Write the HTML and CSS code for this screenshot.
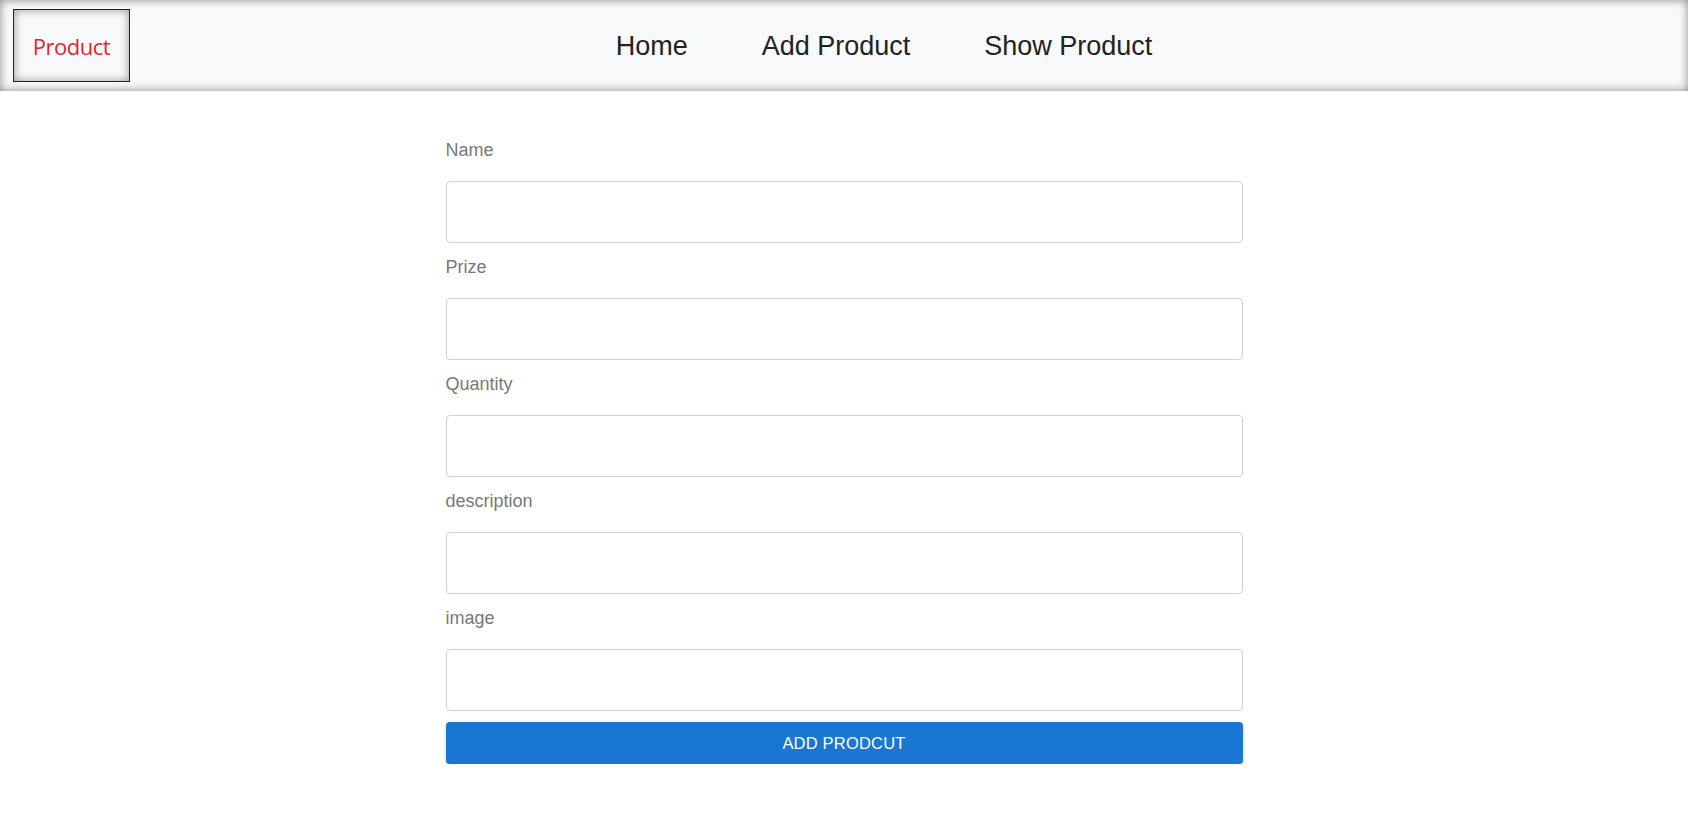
FILE: index.html
```html
<!DOCTYPE html>
<html lang="en">
<head>
<meta charset="utf-8">
<title>Product</title>
<link rel="stylesheet" href="styles.css">
</head>
<body>
<nav class="navbar">
  <a class="brand" href="#">Product</a>
  <div class="links">
    <a class="nav-link" href="#">Home</a>
    <a class="nav-link" href="#">Add Product</a>
    <a class="nav-link" href="#">Show Product</a>
  </div>
</nav>
<main class="page">
  <form class="product-form">
    <div class="field">
      <label class="field-label">Name</label>
      <input class="field-input" type="text">
    </div>
    <div class="field">
      <label class="field-label">Prize</label>
      <input class="field-input" type="text">
    </div>
    <div class="field">
      <label class="field-label">Quantity</label>
      <input class="field-input" type="text">
    </div>
    <div class="field">
      <label class="field-label">description</label>
      <input class="field-input" type="text">
    </div>
    <div class="field field-last">
      <label class="field-label">image</label>
      <input class="field-input" type="text">
    </div>
    <button class="submit" type="button">ADD PRODCUT</button>
  </form>
</main>
</body>
</html>
```
FILE: styles.css
```css
* { box-sizing: border-box; }
html, body { margin: 0; padding: 0; background: #fff; }
body { font-family: "Liberation Sans", Arial, sans-serif; }

.navbar {
  height: 91px;
  background: #f8f9fa;
  box-shadow: inset 0 0 10px rgba(0, 0, 0, 0.45);
  display: grid;
  grid-template-columns: 1fr auto 1fr;
  align-items: center;
}
.brand {
  justify-self: start;
  margin-left: 13px;
  width: 117px;
  height: 73px;
  border: 1px solid #222;
  box-shadow: inset 0 0 10px rgba(0, 0, 0, 0.4);
  background: #f8f9fa;
  display: flex;
  align-items: center;
  justify-content: center;
  font-family: "Open Sans", "Noto Sans", sans-serif;
  font-size: 22px;
  letter-spacing: -0.5px;
  color: #e2262c;
  text-decoration: none;
  padding-top: 1px;
}
.links {
  display: flex;
  gap: 74px;
  padding-left: 80px;
  padding-top: 2px;
}
.nav-link {
  font-family: "Liberation Sans", Arial, sans-serif;
  font-size: 27px;
  color: #222;
  text-decoration: none;
}

.page { padding-top: 48px; }
.product-form {
  width: 797px;
  margin: 0 auto;
  display: flex;
  flex-direction: column;
}
.field {
  display: flex;
  flex-direction: column;
  margin-bottom: 13px;
}
.field-last { margin-bottom: 11px; }
.field-label {
  font-size: 18px;
  line-height: 22px;
  color: #787878;
  margin-bottom: 20px;
}
.field-input {
  height: 62px;
  border: 1px solid #d0d0d0;
  border-radius: 4px;
  background: #fff;
  font-size: 16px;
  padding: 0 12px;
  outline: none;
}
.submit {
  height: 42px;
  border: none;
  border-radius: 4px;
  background: #1976d2;
  color: #fff;
  font-family: "Liberation Sans", Arial, sans-serif;
  font-size: 16.5px;
  letter-spacing: 0.2px;
  box-shadow: 0 3px 1px -2px rgba(0,0,0,.2), 0 2px 2px 0 rgba(0,0,0,.14), 0 1px 5px 0 rgba(0,0,0,.12);
  cursor: pointer;
}
```
